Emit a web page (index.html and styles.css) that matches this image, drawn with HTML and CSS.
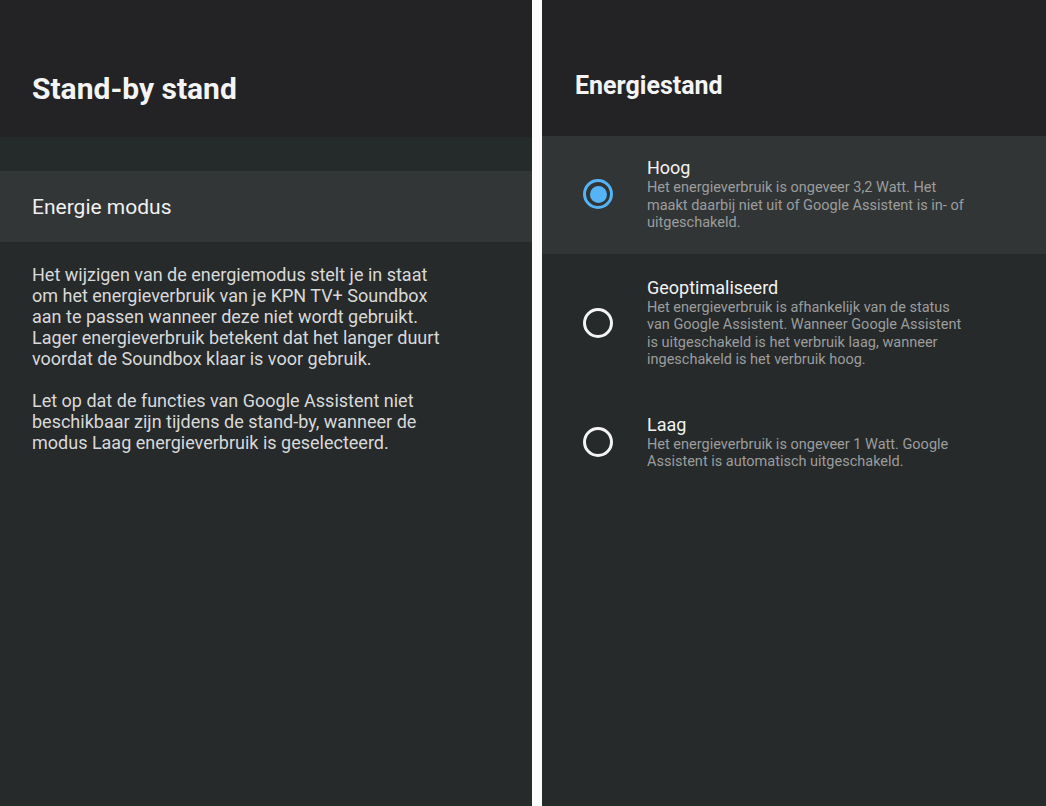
FILE: index.html
```html
<!DOCTYPE html>
<html lang="nl">
<head>
<meta charset="utf-8">
<title>Stand-by stand</title>
<link rel="stylesheet" href="styles.css">
</head>
<body>
<div class="screen">
  <section class="panel panel-left">
    <header class="header header-left">
      <h1 class="title-left">Stand-by stand</h1>
    </header>
    <div class="strip"></div>
    <div class="menu-item">Energie modus</div>
    <div class="info">
      <p>Het wijzigen van de energiemodus stelt je in staat om het energieverbruik van je KPN TV+ Soundbox aan te passen wanneer deze niet wordt gebruikt. Lager energieverbruik betekent dat het langer duurt voordat de Soundbox klaar is voor gebruik.</p>
      <p>Let op dat de functies van Google Assistent niet beschikbaar zijn tijdens de stand-by, wanneer de modus Laag energieverbruik is geselecteerd.</p>
    </div>
  </section>
  <section class="panel panel-right">
    <header class="header header-right">
      <h1 class="title-right">Energiestand</h1>
    </header>
    <div class="options">
      <div class="option option-selected">
        <span class="radio radio-on"><span class="radio-dot"></span></span>
        <div class="option-text">
          <div class="option-title">Hoog</div>
          <div class="option-desc">Het energieverbruik is ongeveer 3,2 Watt. Het maakt daarbij niet uit of Google Assistent is in- of uitgeschakeld.</div>
        </div>
      </div>
      <div class="option">
        <span class="radio"></span>
        <div class="option-text">
          <div class="option-title">Geoptimaliseerd</div>
          <div class="option-desc">Het energieverbruik is afhankelijk van de status van Google Assistent. Wanneer Google Assistent is uitgeschakeld is het verbruik laag, wanneer ingeschakeld is het verbruik hoog.</div>
        </div>
      </div>
      <div class="option">
        <span class="radio"></span>
        <div class="option-text">
          <div class="option-title">Laag</div>
          <div class="option-desc">Het energieverbruik is ongeveer 1 Watt. Google Assistent is automatisch uitgeschakeld.</div>
        </div>
      </div>
    </div>
  </section>
</div>
</body>
</html>
```
FILE: styles.css
```css
html, body {
  margin: 0;
  padding: 0;
  height: 100%;
}
body {
  background: #fcfcfd;
  font-family: Roboto, "Noto Sans", "Liberation Sans", sans-serif;
  color: #f2f2f2;
}
.screen {
  display: flex;
  gap: 10px;
  height: 806px;
}
.panel {
  display: flex;
  flex-direction: column;
  background: #262a2b;
}
.panel-left {
  width: 532px;
}
.panel-right {
  flex: 1;
}
.header {
  background: #232325;
  box-sizing: border-box;
}
.header-left {
  height: 137px;
  padding: 71px 0 0 32px;
}
.header-right {
  height: 136px;
  padding: 71px 0 0 33px;
}
.title-left, .title-right {
  margin: 0;
  font-weight: 700;
  color: #f4f4f4;
}
.title-left {
  font-size: 30px;
  line-height: 35px;
}
.title-right {
  font-size: 25px;
  line-height: 30px;
}
.strip {
  height: 34px;
  background: #252a2b;
}
.menu-item {
  height: 71px;
  display: flex;
  align-items: center;
  padding-left: 32px;
  background: #323637;
  font-size: 21px;
  color: #f0f0f0;
}
.info {
  padding: 22px 82px 0 32px;
  font-size: 18px;
  line-height: 21px;
  color: #d9d9d9;
}
.info p {
  margin: 0 0 21px;
}
.options {
  display: flex;
  flex-direction: column;
}
.option {
  display: flex;
  align-items: center;
  padding: 23px 0 22px;
}
.option-selected {
  background: #313536;
  padding: 21px 0 22px;
}
.radio {
  flex: none;
  box-sizing: border-box;
  width: 30px;
  height: 30px;
  margin: 0 34px 0 41px;
  border: 3px solid #f4f4f4;
  border-radius: 50%;
  display: flex;
  align-items: center;
  justify-content: center;
}
.radio-on {
  border-color: #55b4f6;
}
.radio-dot {
  width: 17px;
  height: 17px;
  border-radius: 50%;
  background: #55b4f6;
}
.option-text {
  width: 322px;
}
.option-title {
  font-size: 18px;
  line-height: 22px;
  color: #f2f2f2;
}
.option-desc {
  font-size: 14.5px;
  line-height: 17.5px;
  color: #9c9d9d;
}
```
